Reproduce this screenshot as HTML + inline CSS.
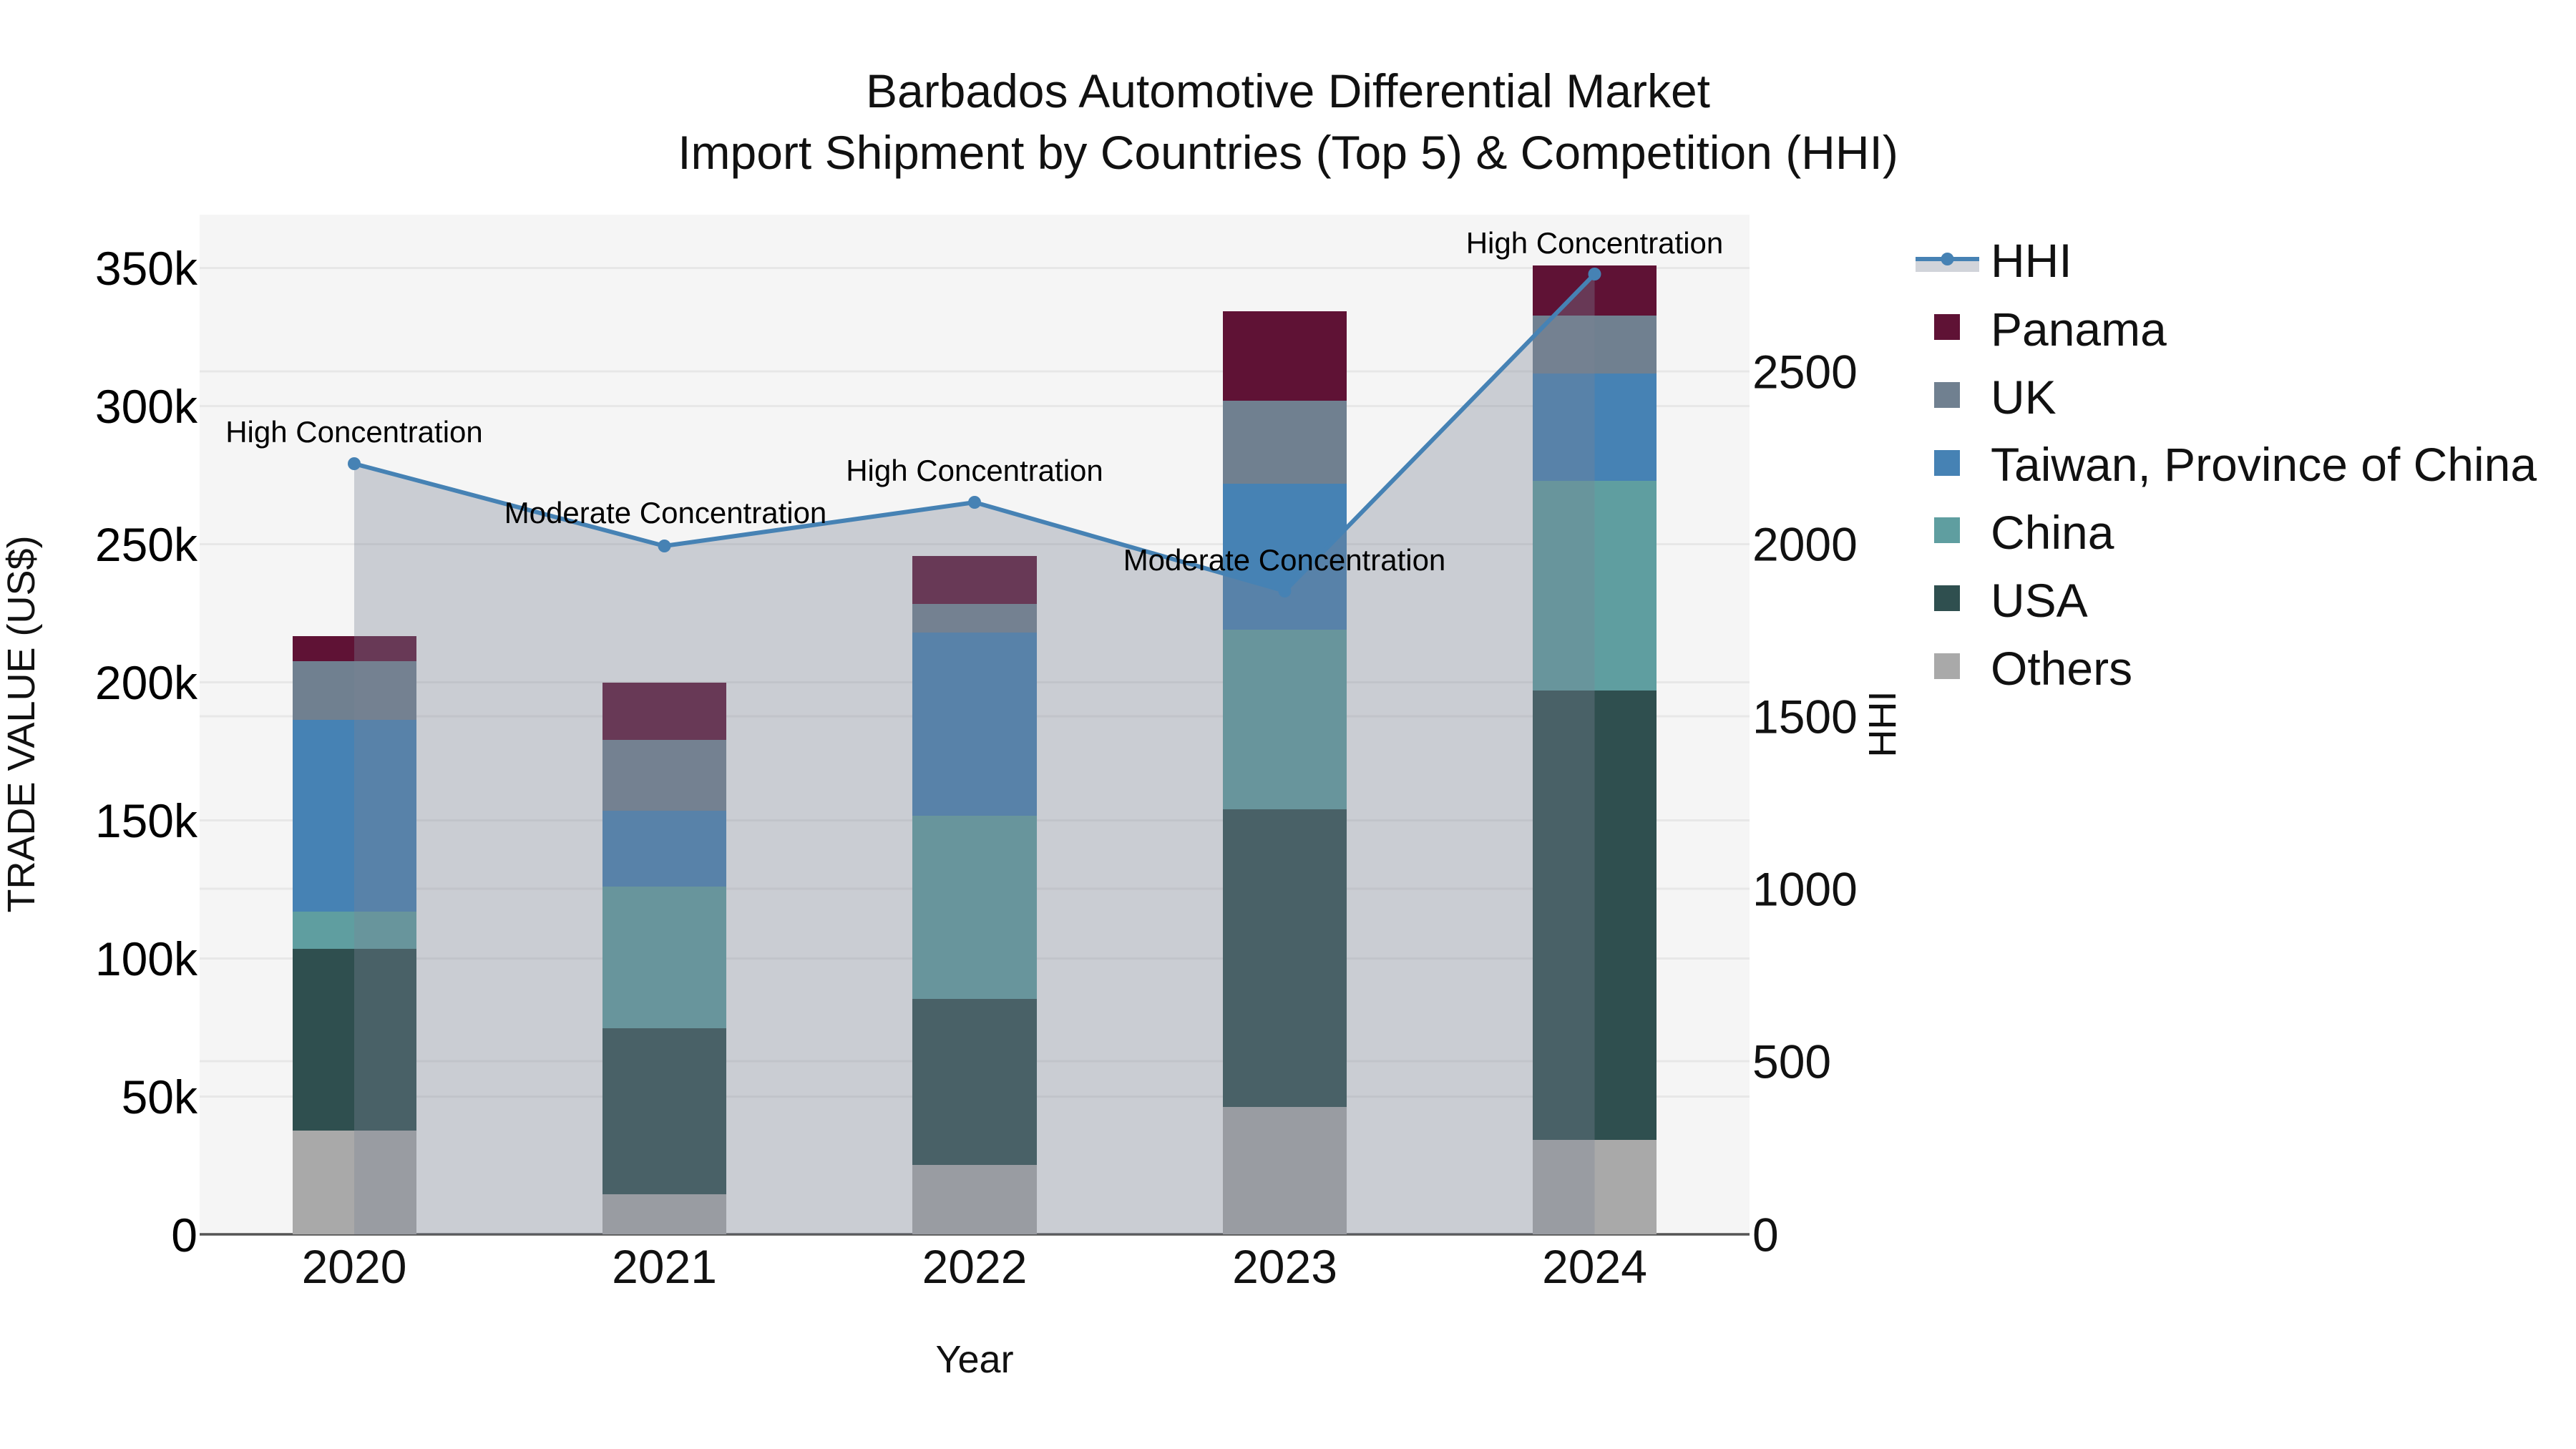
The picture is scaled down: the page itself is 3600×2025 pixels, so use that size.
<!DOCTYPE html>
<html lang="en">
<head>
<meta charset="utf-8">
<title>Barbados Automotive Differential Market</title>
<style>
html,body{margin:0;padding:0;background:#fff;width:3600px;height:2025px;overflow:hidden}
svg{display:block}
text{font-family:"Liberation Sans",Arial,sans-serif}
</style>
</head>
<body>
<svg xmlns="http://www.w3.org/2000/svg" width="3600" height="2025" viewBox="0 0 3600 2025">
<rect width="3600" height="2025" fill="#fff"/>
<rect x="279" y="300" width="2166" height="1425" fill="#f5f5f5"/>
<g stroke="#e7e7e7" stroke-width="3">
<line x1="279" x2="2445" y1="374.5" y2="374.5"/>
<line x1="279" x2="2445" y1="567.5" y2="567.5"/>
<line x1="279" x2="2445" y1="760.5" y2="760.5"/>
<line x1="279" x2="2445" y1="953.5" y2="953.5"/>
<line x1="279" x2="2445" y1="1146.5" y2="1146.5"/>
<line x1="279" x2="2445" y1="1339.5" y2="1339.5"/>
<line x1="279" x2="2445" y1="1532.5" y2="1532.5"/>
<line x1="279" x2="2445" y1="519" y2="519"/>
<line x1="279" x2="2445" y1="1001" y2="1001"/>
<line x1="279" x2="2445" y1="1242" y2="1242"/>
<line x1="279" x2="2445" y1="1483" y2="1483"/>
</g>
<line x1="279" x2="2445" y1="1725" y2="1725" stroke="#555" stroke-width="3.4"/>
<!-- bars 2020 -->
<g>
<rect x="409" y="1580" width="173" height="145" fill="#a9a9a9"/>
<rect x="409" y="1326" width="173" height="254" fill="#2f4f4f"/>
<rect x="409" y="1274" width="173" height="52" fill="#5f9ea0"/>
<rect x="409" y="1006" width="173" height="268" fill="#4682b4"/>
<rect x="409" y="924" width="173" height="82" fill="#708090"/>
<rect x="409" y="889" width="173" height="35" fill="#5f1235"/>
<!-- 2021 -->
<rect x="842" y="1669" width="173" height="56" fill="#a9a9a9"/>
<rect x="842" y="1437" width="173" height="232" fill="#2f4f4f"/>
<rect x="842" y="1239" width="173" height="198" fill="#5f9ea0"/>
<rect x="842" y="1133" width="173" height="106" fill="#4682b4"/>
<rect x="842" y="1034" width="173" height="99" fill="#708090"/>
<rect x="842" y="954" width="173" height="80" fill="#5f1235"/>
<!-- 2022 -->
<rect x="1275" y="1628" width="174" height="97" fill="#a9a9a9"/>
<rect x="1275" y="1396" width="174" height="232" fill="#2f4f4f"/>
<rect x="1275" y="1140" width="174" height="256" fill="#5f9ea0"/>
<rect x="1275" y="884" width="174" height="256" fill="#4682b4"/>
<rect x="1275" y="844" width="174" height="40" fill="#708090"/>
<rect x="1275" y="777" width="174" height="67" fill="#5f1235"/>
<!-- 2023 -->
<rect x="1709" y="1547" width="173" height="178" fill="#a9a9a9"/>
<rect x="1709" y="1131" width="173" height="416" fill="#2f4f4f"/>
<rect x="1709" y="880" width="173" height="251" fill="#5f9ea0"/>
<rect x="1709" y="676" width="173" height="204" fill="#4682b4"/>
<rect x="1709" y="560" width="173" height="116" fill="#708090"/>
<rect x="1709" y="435" width="173" height="125" fill="#5f1235"/>
<!-- 2024 -->
<rect x="2142" y="1593" width="173" height="132" fill="#a9a9a9"/>
<rect x="2142" y="965" width="173" height="628" fill="#2f4f4f"/>
<rect x="2142" y="672" width="173" height="293" fill="#5f9ea0"/>
<rect x="2142" y="522" width="173" height="150" fill="#4682b4"/>
<rect x="2142" y="441" width="173" height="81" fill="#708090"/>
<rect x="2142" y="371" width="173" height="70" fill="#5f1235"/>
</g>
<!-- HHI -->
<polygon points="495,648 928.5,763 1362,702 1795.5,826 2228.5,383 2228.5,1725 495,1725" fill="#7a8496" fill-opacity="0.35"/>
<polyline points="495,648 928.5,763 1362,702 1795.5,826 2228.5,383" fill="none" stroke="#4682b4" stroke-width="6" stroke-linejoin="round"/>
<g fill="#4682b4">
<circle cx="495" cy="648" r="9"/>
<circle cx="928.5" cy="763" r="9"/>
<circle cx="1362" cy="702" r="9"/>
<circle cx="1795.5" cy="826" r="9"/>
<circle cx="2228.5" cy="383" r="9"/>
</g>
<!-- annotations -->
<g font-size="42" fill="#000" text-anchor="middle">
<text x="495" y="618">High Concentration</text>
<text x="930" y="731">Moderate Concentration</text>
<text x="1362" y="672">High Concentration</text>
<text x="1795" y="797">Moderate Concentration</text>
<text x="2228.5" y="354">High Concentration</text>
</g>
<!-- title -->
<g font-size="66" fill="#111" text-anchor="middle">
<text x="1800" y="150">Barbados Automotive Differential Market</text>
<text x="1800" y="236">Import Shipment by Countries (Top 5) &amp; Competition (HHI)</text>
</g>
<!-- left ticks -->
<g font-size="66" fill="#000" text-anchor="end">
<text x="276" y="398">350k</text>
<text x="276" y="591">300k</text>
<text x="276" y="784">250k</text>
<text x="276" y="977">200k</text>
<text x="276" y="1170">150k</text>
<text x="276" y="1363">100k</text>
<text x="276" y="1556">50k</text>
<text x="276" y="1749">0</text>
</g>
<!-- right ticks -->
<g font-size="66" fill="#111" text-anchor="start">
<text x="2449" y="542.5">2500</text>
<text x="2449" y="783.5">2000</text>
<text x="2449" y="1024.5">1500</text>
<text x="2449" y="1265.5">1000</text>
<text x="2449" y="1506.5">500</text>
<text x="2449" y="1748.5">0</text>
</g>
<!-- x ticks -->
<g font-size="66" fill="#111" text-anchor="middle">
<text x="495" y="1793">2020</text>
<text x="928.5" y="1793">2021</text>
<text x="1362" y="1793">2022</text>
<text x="1795.5" y="1793">2023</text>
<text x="2228.5" y="1793">2024</text>
</g>
<!-- axis titles -->
<text x="1362" y="1918" font-size="54" fill="#111" text-anchor="middle">Year</text>
<text transform="translate(48 1012) rotate(-90)" font-size="54" fill="#111" text-anchor="middle">TRADE VALUE (US$)</text>
<text transform="translate(2649 1012) rotate(-90)" font-size="54" fill="#111" text-anchor="middle">HHI</text>
<!-- legend -->
<rect x="2677" y="362" width="89" height="18" fill="#7a8496" fill-opacity="0.35"/>
<rect x="2677" y="359" width="89" height="6" fill="#4682b4"/>
<circle cx="2721.5" cy="362" r="9" fill="#4682b4"/>
<rect x="2703" y="439" width="36" height="36" fill="#5f1235"/>
<rect x="2703" y="534" width="36" height="36" fill="#708090"/>
<rect x="2703" y="629" width="36" height="36" fill="#4682b4"/>
<rect x="2703" y="723" width="36" height="36" fill="#5f9ea0"/>
<rect x="2703" y="818" width="36" height="36" fill="#2f4f4f"/>
<rect x="2703" y="913" width="36" height="36" fill="#a9a9a9"/>
<g font-size="66" fill="#111">
<text x="2782" y="387">HHI</text>
<text x="2782" y="483">Panama</text>
<text x="2782" y="578">UK</text>
<text x="2782" y="672">Taiwan, Province of China</text>
<text x="2782" y="767">China</text>
<text x="2782" y="862">USA</text>
<text x="2782" y="957">Others</text>
</g>
</svg>
</body>
</html>
